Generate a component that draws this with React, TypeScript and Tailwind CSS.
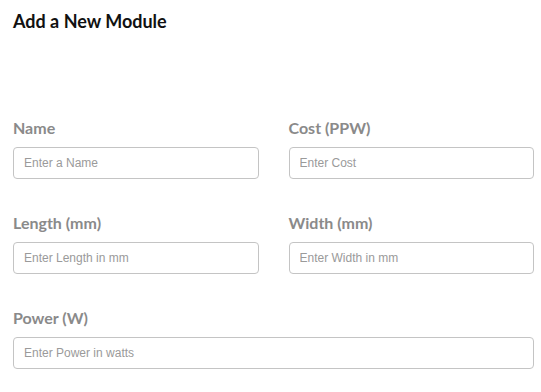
const FIELDS_ROW_1 = [
  { label: "Name", placeholder: "Enter a Name" },
  { label: "Cost (PPW)", placeholder: "Enter Cost" },
];

const FIELDS_ROW_2 = [
  { label: "Length (mm)", placeholder: "Enter Length in mm" },
  { label: "Width (mm)", placeholder: "Enter Width in mm" },
];

const Field = ({ label, placeholder }: { label: string; placeholder: string }) => (
  <div className="flex flex-col">
    <label className="font-['Lato',sans-serif] font-bold text-[16px] leading-[20px] text-[#8a8a8a]">
      {label}
    </label>
    <input
      type="text"
      placeholder={placeholder}
      className="mt-[9px] h-[32px] w-full rounded-[4px] border border-[#c4c4c4] bg-white px-[10px] font-['Liberation_Sans',Arial,sans-serif] text-[12px] text-[#333] placeholder:text-[#9a9a9a] outline-none"
    />
  </div>
);

const App = () => {
  return (
    <div className="w-[541px] h-[392px] bg-white pl-[13px] pt-[9px]">
      <h1 className="font-['Lato',sans-serif] font-bold text-[18px] leading-[24px] text-[#111]">
        Add a New Module
      </h1>

      <div className="mt-[85px] w-[521px] flex flex-col gap-[34px]">
        <div className="grid grid-cols-2 gap-[30px]">
          {FIELDS_ROW_1.map((f) => (
            <Field key={f.label} label={f.label} placeholder={f.placeholder} />
          ))}
        </div>
        <div className="grid grid-cols-2 gap-[30px]">
          {FIELDS_ROW_2.map((f) => (
            <Field key={f.label} label={f.label} placeholder={f.placeholder} />
          ))}
        </div>
        <Field label="Power (W)" placeholder="Enter Power in watts" />
      </div>
    </div>
  );
};

export default App;
